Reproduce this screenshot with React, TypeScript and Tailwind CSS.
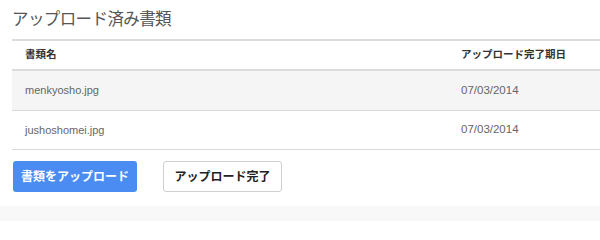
import React from 'react';

export default function App() {
  const files = [
    { name: 'menkyosho.jpg', date: '07/03/2014' },
    { name: 'jushoshomei.jpg', date: '07/03/2014' },
  ];

  return (
    <div
      className="w-full h-[221px] bg-white flex flex-col overflow-hidden"
      style={{ fontFamily: '"Liberation Sans", "Noto Sans CJK JP", sans-serif' }}
    >
      <div className="pl-[12px]">
        {/* Title */}
        <h2 className="h-[39px] pt-[9px] text-[16.5px] leading-[20px] text-[#555] tracking-[-0.6px]">
          アップロード済み書類
        </h2>

        {/* Table */}
        <div className="border-t-2 border-[#dcdcdc]">
          <div className="flex items-center h-[30px] border-b-2 border-[#dcdcdc] text-[10.5px] font-bold text-[#333]">
            <div className="w-[449px] pl-[13px]">書類名</div>
            <div>アップロード完了期日</div>
          </div>
          {files.map((file, i) => (
            <div
              key={file.name}
              className={
                'flex items-center border-b border-[#d9d9d9] text-[11px] text-[#666] ' +
                (i % 2 === 0 ? 'h-[40px] bg-[#f5f5f5]' : 'h-[39px] bg-white')
              }
            >
              <div className="w-[449px] pl-[13px]">{file.name}</div>
              <div className="text-[11.5px]">{file.date}</div>
            </div>
          ))}
        </div>

        {/* Buttons */}
        <div className="flex items-center gap-[26px] mt-[11px] pl-px">
          <button className="w-[124px] h-[31px] flex items-center justify-center rounded-[3px] bg-[#4b8cf2] text-white text-[12px] font-bold">
            書類をアップロード
          </button>
          <button className="w-[119px] h-[31px] flex items-center justify-center rounded-[3px] border border-[#cfcfcf] bg-white text-[#222] text-[12px] font-bold">
            アップロード完了
          </button>
        </div>
      </div>

      <div className="mt-[14px] flex-1 bg-[#f8f8f8]" />
    </div>
  );
}
